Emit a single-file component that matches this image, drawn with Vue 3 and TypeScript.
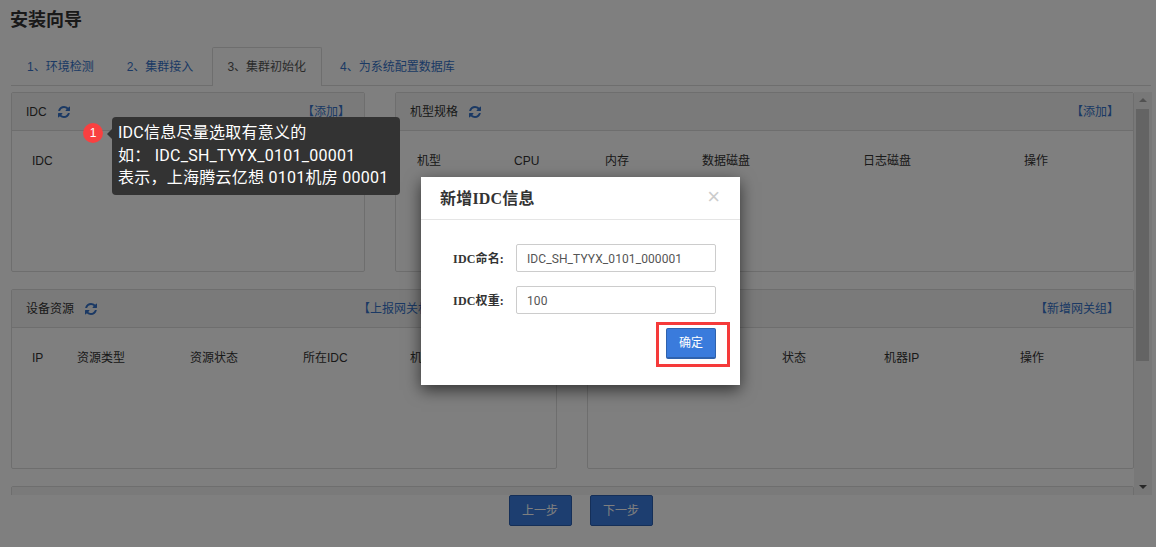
<script setup lang="ts">
interface Card {
  title: string
  link: string
  linkGap: number
  width: number
  gap: number
  cols: string[]
  widths: number[]
  pad: number
}

const tabs: string[] = ['1、环境检测', '2、集群接入', '3、集群初始化', '4、为系统配置数据库']

const rows: Card[][] = [
  [
    { title: 'IDC', link: '【添加】', linkGap: 0, width: 354, gap: 30, pad: 20, cols: ['IDC', '权重', '操作'], widths: [100, 110, 100] },
    { title: '机型规格', link: '【添加】', linkGap: 0, width: 739, gap: 0, pad: 21, cols: ['机型', 'CPU', '内存', '数据磁盘', '日志磁盘', '操作'], widths: [97, 91, 97, 161, 161, 80] }
  ],
  [
    { title: '设备资源', link: '【上报网关机】', linkGap: 100, width: 546, gap: 30, pad: 20, cols: ['IP', '资源类型', '资源状态', '所在IDC', '机器'], widths: [45, 113, 113, 107, 80] },
    { title: '网关组', link: '【新增网关组】', linkGap: 0, width: 547, gap: 0, pad: 194, cols: ['状态', '机器IP', '操作'], widths: [102, 136, 80] }
  ]
]

const iconPath =
  'M1639 1056q0 5-1 7-64 268-268 434.5t-478 166.5q-146 0-282.5-55t-243.5-157l-129 129q-19 19-45 19t-45-19-19-45v-448q0-26 19-45t45-19h448q26 0 45 19t19 45-19 45l-137 137q71 66 161 102t187 36q134 0 250-65t186-179q11-17 53-117 8-23 30-23h192q13 0 22.5 9.5t9.5 22.5zm25-800v448q0 26-19 45t-45 19h-448q-26 0-45-19t-19-45 19-45l138-138q-148-137-349-137-134 0-250 65t-186 179q-11 17-53 117-8 23-30 23h-199q-13 0-22.5-9.5t-9.5-22.5v-7q65-268 270-434.5t480-166.5q146 0 284 55.5t245 156.5l130-129q19-19 45-19t45 19 19 45z'
</script>

<template>
  <div class="page">
    <h1 class="title">安装向导</h1>

    <ul class="tabs">
      <li v-for="(t, i) in tabs" :key="t" class="tab" :class="{ active: i === 2 }">{{ t }}</li>
    </ul>

    <div class="main">
      <div class="content">
        <div v-for="(row, r) in rows" :key="r" class="row">
          <section
            v-for="c in row"
            :key="c.title"
            class="card"
            :style="{ width: c.width + 'px', marginRight: c.gap + 'px' }"
          >
            <header class="card-head">
              <span class="card-title">{{ c.title }}</span>
              <svg class="refresh" viewBox="0 0 1792 1792"><path :d="iconPath" /></svg>
              <a class="link" :style="{ marginRight: c.linkGap + 'px' }">{{ c.link }}</a>
            </header>
            <div class="thead" :style="{ paddingLeft: c.pad + 'px' }">
              <span
                v-for="(h, i) in c.cols"
                :key="h"
                class="th"
                :style="{ width: c.widths[i] + 'px' }"
              >{{ h }}</span>
            </div>
          </section>
        </div>
        <section class="card card-clipped">
          <header class="card-head"></header>
        </section>
      </div>
      <div class="scrollbar">
        <span class="arrow up"></span>
        <span class="thumb"></span>
        <span class="arrow down"></span>
      </div>
    </div>

    <footer class="footer">
      <button class="step">上一步</button>
      <button class="step">下一步</button>
    </footer>

    <div class="overlay"></div>

    <div class="modal">
      <div class="modal-head">
        <span class="modal-title">新增IDC信息</span>
        <span class="close">×</span>
      </div>
      <div class="modal-body">
        <label class="field">
          <span class="field-label">IDC命名:</span>
          <input class="field-input" value="IDC_SH_TYYX_0101_000001" />
        </label>
        <label class="field">
          <span class="field-label">IDC权重:</span>
          <input class="field-input" value="100" />
        </label>
        <div class="actions">
          <button class="confirm">确定</button>
          <span class="highlight"></span>
        </div>
      </div>
    </div>

    <div class="guide">
      <span class="badge">1</span>
      <div class="tip">
        <p>IDC信息尽量选取有意义的</p>
        <p>如： IDC_SH_TYYX_0101_00001</p>
        <p>表示，上海腾云亿想 0101机房 00001</p>
      </div>
    </div>
  </div>
</template>

<style>
html,
body {
  margin: 0;
  height: 100%;
  overflow: hidden;
  background: #fff;
}
</style>

<style scoped>
.page {
  position: relative;
  width: 1156px;
  height: 547px;
  overflow: hidden;
  background: #fff;
  color: #333;
  font: 12px/20px "Liberation Sans", "Noto Sans CJK SC", sans-serif;
}
.title {
  margin: 0;
  height: 47px;
  padding: 9px 0 0 10px;
  box-sizing: border-box;
  font-size: 18px;
  line-height: 22px;
  font-weight: 700;
}
.tabs {
  display: flex;
  margin: 0 5px 0 11px;
  padding: 0;
  height: 38px;
  list-style: none;
  border-bottom: 1px solid #ddd;
}
.tab {
  height: 38px;
  margin-right: 3px;
  padding: 0 15px 0 16px;
  box-sizing: border-box;
  line-height: 40px;
  color: #3673c9;
}
.tab:first-child {
  padding-left: 16px;
  margin-right: 2px;
}
.tab:nth-child(2) {
  margin-right: 4px;
}
.tab.active {
  height: 39px;
  margin-right: 2px;
  color: #555;
  background: #fff;
  border: 1px solid #ddd;
  border-bottom: 0;
  border-radius: 2px 2px 0 0;
  padding: 0 15px 0 14px;
  line-height: 38px;
}
.main {
  display: flex;
  height: 403px;
  margin-top: 6px;
  padding-right: 4px;
}
.content {
  flex: 1;
  overflow: hidden;
  padding-left: 11px;
}
.row {
  display: flex;
  margin-bottom: 17px;
}
.card {
  flex: none;
  height: 180px;
  box-sizing: border-box;
  border: 1px solid #ddd;
  border-radius: 2px;
  background: #fff;
}
.card-clipped {
  width: 1123px;
}
.card-head {
  display: flex;
  align-items: center;
  height: 38px;
  padding: 0 14px 0 14px;
  box-sizing: border-box;
  background: #f5f5f5;
  border-bottom: 1px solid #ddd;
}
.card-title {
  margin-right: 10px;
}
.refresh {
  width: 14px;
  height: 14px;
  fill: #3673c9;
}
.link {
  margin-left: auto;
  color: #3673c9;
}
.thead {
  display: flex;
  padding-top: 20px;
}
.th {
  flex: none;
  white-space: nowrap;
}
.scrollbar {
  position: relative;
  flex: none;
  width: 18px;
  background: #f1f1f1;
}
.thumb {
  display: block;
  width: 13px;
  height: 252px;
  margin: 17px 0 0 2px;
  background: #c8c8c8;
}
.arrow {
  position: absolute;
  left: 5px;
  width: 0;
  height: 0;
  border-left: 4px solid transparent;
  border-right: 4px solid transparent;
}
.arrow.up {
  top: 6px;
  border-bottom: 4px solid #a3a3a3;
}
.arrow.down {
  bottom: 6px;
  border-top: 4px solid #505050;
}
.footer {
  display: flex;
  justify-content: center;
  gap: 18px;
  padding-left: 5px;
}
.step {
  width: 63px;
  height: 31px;
  padding: 0;
  background: #3a7de0;
  border: 1px solid #2b5fb0;
  border-radius: 2px;
  color: #fff;
  font: inherit;
}
.overlay {
  position: absolute;
  inset: 0;
  background: rgba(0, 0, 0, 0.5);
}
.modal {
  position: absolute;
  left: 421px;
  top: 177px;
  width: 319px;
  height: 208px;
  background: #fff;
  box-shadow: 0 5px 15px rgba(0, 0, 0, 0.6);
}
.modal-head {
  display: flex;
  justify-content: space-between;
  height: 43px;
  padding: 0 20px 0 19px;
  box-sizing: border-box;
  border-bottom: 1px solid #e5e5e5;
}
.modal-title {
  font: 700 16px/43px "Liberation Serif", "Noto Sans CJK SC", serif;
  letter-spacing: 0.2px;
  color: #333;
}
.close {
  font: 400 22px/40px "Liberation Sans", sans-serif;
  color: #ccc;
}
.modal-body {
  padding: 24px 24px 0 0;
}
.field {
  display: flex;
  align-items: center;
  justify-content: flex-end;
  margin-bottom: 14px;
}
.field-label {
  margin-right: 12px;
  padding-top: 2px;
  font: 700 12px/20px "Liberation Serif", "Noto Sans CJK SC", serif;
  letter-spacing: 0.15px;
  color: #333;
}
.field-input {
  width: 200px;
  height: 28px;
  padding: 1px 10px 0;
  box-sizing: border-box;
  border: 1px solid #ccc;
  border-radius: 2px;
  outline: 0;
  color: #555;
  font: 12px Roboto, sans-serif;
  letter-spacing: 0.09px;
}
.actions {
  position: relative;
  display: flex;
  justify-content: flex-end;
}
.confirm {
  width: 50px;
  height: 31px;
  padding: 0;
  background: #3a7bdc;
  border: 1px solid #2f62ad;
  border-bottom-width: 2px;
  border-radius: 2px;
  color: #fff;
  font: inherit;
}
.highlight {
  position: absolute;
  right: -14px;
  top: -6px;
  width: 74px;
  height: 45px;
  box-sizing: border-box;
  border: 3px solid #f53a3a;
}
.guide {
  position: absolute;
  left: 83px;
  top: 117px;
  display: flex;
  align-items: flex-start;
}
.badge {
  width: 20px;
  height: 20px;
  margin: 6px 9px 0 0;
  border-radius: 50%;
  background: #f94040;
  color: #fff;
  text-align: center;
  font: 12px/20px "Liberation Sans", sans-serif;
}
.tip {
  position: relative;
  width: 288px;
  height: 78px;
  padding: 5px 0 0 6px;
  box-sizing: border-box;
  background: #333;
  border-radius: 4px;
  color: #fff;
  font-family: Roboto, "Noto Sans CJK SC", sans-serif;
  font-size: 16px;
  line-height: 22.5px;
  letter-spacing: 0.25px;
}
.tip::before {
  content: "";
  position: absolute;
  left: -5px;
  top: 12px;
  border-top: 5px solid transparent;
  border-bottom: 5px solid transparent;
  border-right: 5px solid #333;
}
.tip p {
  margin: 0;
  white-space: nowrap;
}
</style>
